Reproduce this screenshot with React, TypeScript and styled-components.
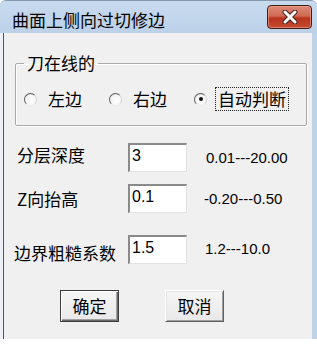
import React from "react";
import styled, { createGlobalStyle, css } from "styled-components";

const GlobalStyle = createGlobalStyle`
  html, body { margin: 0; padding: 0; background: #ffffff; }
  body { font-family: "Noto Sans CJK SC", "Noto Sans", sans-serif; color: #000; }
  * { box-sizing: border-box; }
`;

const Page = styled.div`
  width: 317px;
  height: 344px;
  background: #ffffff;
  overflow: hidden;
`;

const Window = styled.div`
  height: 339px;
  display: flex;
  flex-direction: column;
  border-top: 1px solid #8497ad;
  border-radius: 6px 6px 0 0;
  background: #c3d6ec;
  overflow: hidden;
`;

const TitleBar = styled.div`
  height: 32px;
  flex: none;
  display: flex;
  justify-content: space-between;
  align-items: flex-start;
  padding: 4px 5px 0 12px;
  background: linear-gradient(#c8daee, #bcd1e9);
`;

const Title = styled.div`
  font-size: 17px;
  line-height: 22px;
  margin-top: 4px;
  color: #000;
`;

const CloseButton = styled.div`
  width: 45px;
  height: 24px;
  border: 1px solid #3f1c18;
  border-radius: 4px;
  background: linear-gradient(#dc8a76 0%, #d06a52 45%, #b8341f 55%, #c64a30 100%);
  box-shadow: inset 0 0 0 1px rgba(240, 170, 150, 0.6);
  display: flex;
  align-items: center;
  justify-content: center;
`;

const Body = styled.div`
  flex: 1;
  display: flex;
  padding: 0 5px 0 3px;
  background: linear-gradient(to right, #eef2f8 0, #eef2f8 3px, #bfd2e8 3px);
`;

const Client = styled.div`
  flex: 1;
  display: flex;
  flex-direction: column;
  background: #f0f0f0;
  border-left: 1px solid #555555;
`;

const Group = styled.fieldset`
  margin: 21px 5px 0 11px;
  padding: 15px 8px 14px 8px;
  border: 1px solid #a9a9a9;
  border-radius: 2px;
  box-shadow: 1px 1px 0 #ffffff, inset 1px 1px 0 #ffffff;
  min-width: 0;
`;

const Legend = styled.legend`
  padding: 0 3px;
  font-size: 17px;
  line-height: 18px;
`;

const RadioRow = styled.div`
  display: flex;
  align-items: center;
  gap: 24px;
  height: 24px;
`;

const RadioItem = styled.label`
  display: flex;
  align-items: center;
  gap: 8px;
`;

const RadioCircle = styled.span<{ $checked?: boolean }>`
  width: 13px;
  height: 13px;
  border-radius: 50%;
  border: 1px solid;
  border-color: #5e5e5e #d6d6d6 #ececec #5e5e5e;
  background: radial-gradient(circle at 60% 60%, #ffffff 0%, #f4f4f4 60%, #d8d8d8 100%);
  display: flex;
  align-items: center;
  justify-content: center;
  ${(p) =>
    p.$checked &&
    css`
      &::after {
        content: "";
        width: 4px;
        height: 4px;
        border-radius: 50%;
        background: #111;
      }
    `}
`;

const RadioLabel = styled.span<{ $focused?: boolean }>`
  font-size: 17px;
  line-height: 22px;
  padding: 0 2px;
  border: 1px dotted ${(p) => (p.$focused ? "#222" : "transparent")};
`;

const Form = styled.div`
  display: flex;
  flex-direction: column;
  padding-left: 13px;
`;

const FieldRow = styled.div<{ $top: number }>`
  display: grid;
  grid-template-columns: 111px 59px auto;
  align-items: center;
  margin-top: ${(p) => p.$top}px;
`;

const FieldLabel = styled.span<{ $shift?: number; $up?: number }>`
  font-size: 17px;
  line-height: 22px;
  margin-left: ${(p) => p.$shift || 0}px;
  margin-bottom: ${(p) => (p.$up && p.$up > 0 ? p.$up : 0)}px;
  margin-top: ${(p) => (p.$up && p.$up < 0 ? -p.$up : 0)}px;
  white-space: nowrap;
`;

const TextBox = styled.input`
  width: 59px;
  height: 29px;
  margin: 0;
  padding: 0 2px 4px 2px;
  border-style: solid;
  border-width: 2px 1px 1px 2px;
  border-color: #8a8a8a #e2e2e2 #e2e2e2 #8a8a8a;
  background: #ffffff;
  font-family: "Liberation Sans", Arial, sans-serif;
  font-size: 16px;
  color: #000;
  outline: none;
`;

const Range = styled.span<{ $gap: number }>`
  margin-left: ${(p) => p.$gap}px;
  font-family: "Liberation Sans", Arial, sans-serif;
  font-size: 15px;
  line-height: 18px;
  color: #000;
`;

const ButtonRow = styled.div`
  display: flex;
  gap: 46px;
  padding-left: 56px;
  margin-top: 26px;
`;

const Button = styled.button<{ $primary?: boolean }>`
  width: 59px;
  height: 32px;
  margin: 0;
  padding: 0;
  font-family: "Noto Sans CJK SC", "Noto Sans", sans-serif;
  font-size: 17px;
  line-height: 22px;
  color: #000;
  background: linear-gradient(#f6f6f6, #e8e8e8);
  ${(p) =>
    p.$primary
      ? css`
          border: 1px solid #3c3c3c;
          box-shadow: inset 1px 1px 0 #ffffff, inset -1px -1px 0 #6a6a6a, inset -2px -2px 0 #a0a0a0;
        `
      : css`
          border: 1px solid;
          border-color: #ffffff #5f5f5f #5f5f5f #ffffff;
          box-shadow: inset 1px 1px 0 #e6e6e6, inset -1px -1px 0 #a0a0a0;
        `}
`;

const CloseIcon = () => (
  <svg width="16" height="14" viewBox="0 0 16 14">
    <path d="M3 2 L13 12 M13 2 L3 12" stroke="#4a1f1a" strokeWidth="5" strokeLinecap="round" />
    <path d="M3 2 L13 12 M13 2 L3 12" stroke="#ffffff" strokeWidth="3" strokeLinecap="round" />
  </svg>
);

export default function App() {
  return (
    <Page>
      <GlobalStyle />
      <Window>
        <TitleBar>
          <Title>曲面上侧向过切修边</Title>
          <CloseButton>
            <CloseIcon />
          </CloseButton>
        </TitleBar>
        <Body>
          <Client>
            <Group>
              <Legend>刀在线的</Legend>
              <RadioRow>
                <RadioItem>
                  <RadioCircle />
                  <RadioLabel>左边</RadioLabel>
                </RadioItem>
                <RadioItem>
                  <RadioCircle />
                  <RadioLabel>右边</RadioLabel>
                </RadioItem>
                <RadioItem>
                  <RadioCircle $checked />
                  <RadioLabel $focused>自动判断</RadioLabel>
                </RadioItem>
              </RadioRow>
            </Group>
            <Form>
              <FieldRow $top={17}>
                <FieldLabel $up={6}>分层深度</FieldLabel>
                <TextBox defaultValue="3" />
                <Range $gap={19}>0.01---20.00</Range>
              </FieldRow>
              <FieldRow $top={12}>
                <FieldLabel>Z向抬高</FieldLabel>
                <TextBox defaultValue="0.1" />
                <Range $gap={17}>-0.20---0.50</Range>
              </FieldRow>
              <FieldRow $top={21}>
                <FieldLabel $shift={-3} $up={-8}>边界粗糙系数</FieldLabel>
                <TextBox defaultValue="1.5" />
                <Range $gap={18}>1.2---10.0</Range>
              </FieldRow>
            </Form>
            <ButtonRow>
              <Button $primary>确定</Button>
              <Button>取消</Button>
            </ButtonRow>
          </Client>
        </Body>
      </Window>
    </Page>
  );
}
